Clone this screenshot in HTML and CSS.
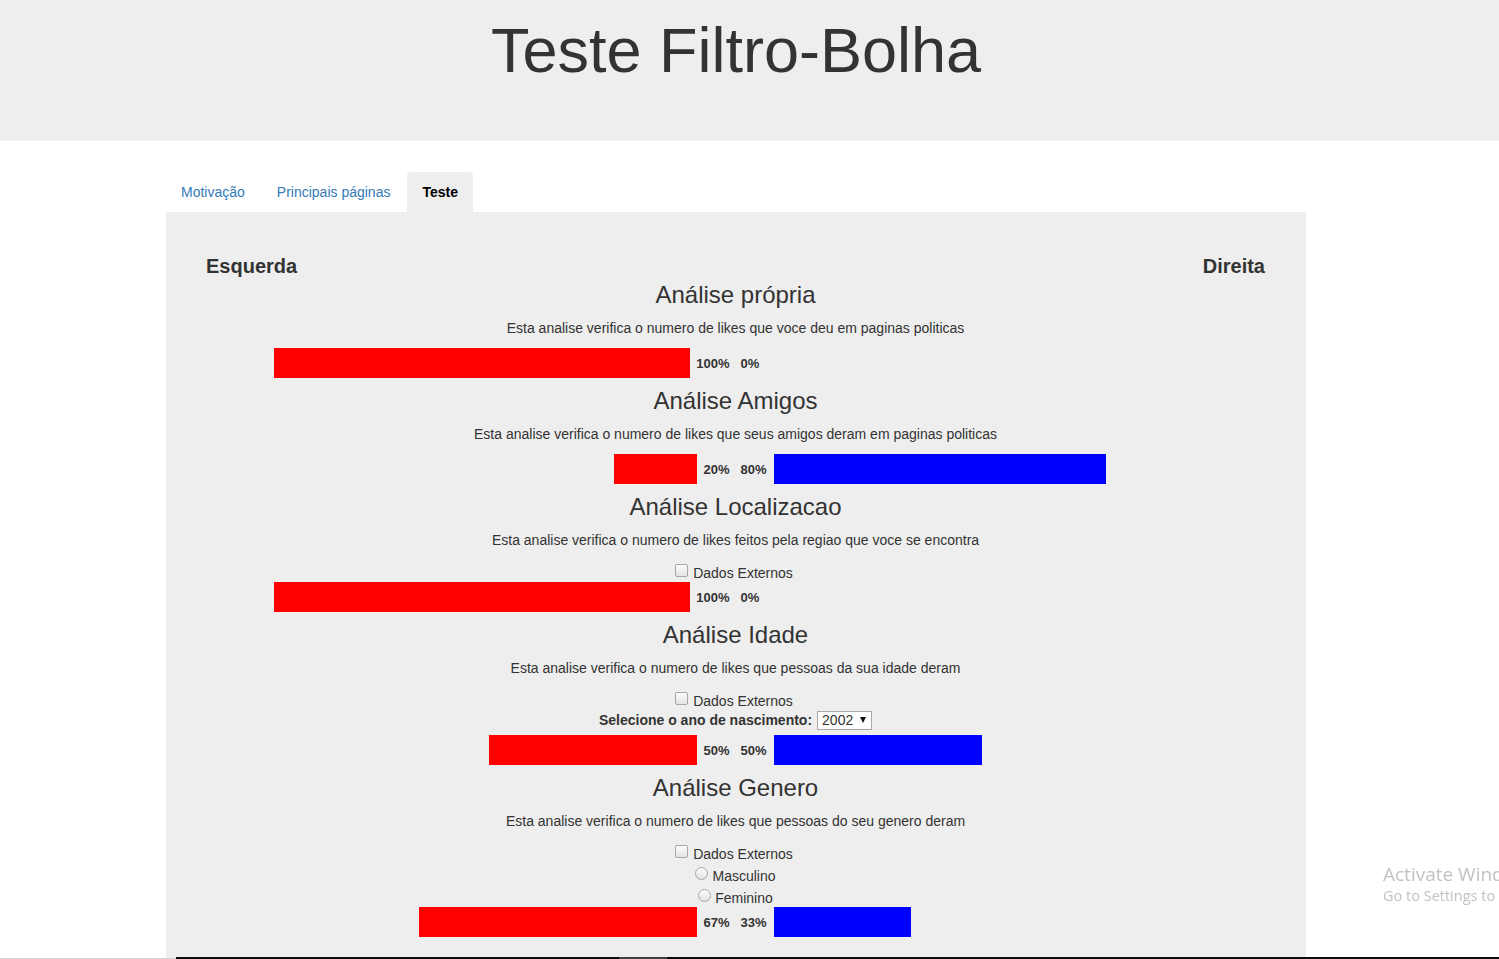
FILE: index.html
```html
<!DOCTYPE html>
<html lang="pt">
<head>
<meta charset="utf-8">
<title>Teste Filtro-Bolha</title>
<link rel="stylesheet" href="styles.css">
</head>
<body>
<header class="jumbotron">
  <div class="jumbotron-inner">
    <h1>Teste Filtro-Bolha</h1>
  </div>
</header>

<div class="container">
  <ul class="nav-tabs">
    <li><a href="#">Motivação</a></li>
    <li><a href="#">Principais páginas</a></li>
    <li class="active"><a href="#">Teste</a></li>
  </ul>

  <div class="panel">
    <div class="sides">
      <span>Esquerda</span>
      <span>Direita</span>
    </div>

    <section class="analysis">
      <h3>Análise própria</h3>
      <p class="desc">Esta analise verifica o numero de likes que voce deu em paginas politicas</p>
      <div class="result">
        <div class="side left"><span class="bar red" style="width:416px"></span><span class="pct">100%</span></div>
        <div class="side right"><span class="pct">0%</span><span class="bar blue" style="width:0px"></span></div>
      </div>
    </section>

    <section class="analysis">
      <h3>Análise Amigos</h3>
      <p class="desc">Esta analise verifica o numero de likes que seus amigos deram em paginas politicas</p>
      <div class="result">
        <div class="side left"><span class="bar red" style="width:83px"></span><span class="pct">20%</span></div>
        <div class="side right"><span class="pct">80%</span><span class="bar blue" style="width:332px"></span></div>
      </div>
    </section>

    <section class="analysis">
      <h3>Análise Localizacao</h3>
      <p class="desc">Esta analise verifica o numero de likes feitos pela regiao que voce se encontra</p>
      <label class="option"><input type="checkbox" class="check"><span>Dados Externos</span></label>
      <div class="result">
        <div class="side left"><span class="bar red" style="width:416px"></span><span class="pct">100%</span></div>
        <div class="side right"><span class="pct">0%</span><span class="bar blue" style="width:0px"></span></div>
      </div>
    </section>

    <section class="analysis">
      <h3>Análise Idade</h3>
      <p class="desc">Esta analise verifica o numero de likes que pessoas da sua idade deram</p>
      <label class="option"><input type="checkbox" class="check"><span>Dados Externos</span></label>
      <div class="select-line">
        <label class="select-label" for="ano">Selecione o ano de nascimento:</label>
        <span class="select-wrap">
          <select id="ano" class="select">
            <option>2002</option>
          </select>
        </span>
      </div>
      <div class="result">
        <div class="side left"><span class="bar red" style="width:208px"></span><span class="pct">50%</span></div>
        <div class="side right"><span class="pct">50%</span><span class="bar blue" style="width:208px"></span></div>
      </div>
    </section>

    <section class="analysis">
      <h3>Análise Genero</h3>
      <p class="desc">Esta analise verifica o numero de likes que pessoas do seu genero deram</p>
      <label class="option"><input type="checkbox" class="check"><span>Dados Externos</span></label>
      <label class="option radio-line"><input type="radio" name="genero" class="radio"><span>Masculino</span></label>
      <label class="option radio-line"><input type="radio" name="genero" class="radio"><span>Feminino</span></label>
      <div class="result">
        <div class="side left"><span class="bar red" style="width:278px"></span><span class="pct">67%</span></div>
        <div class="side right"><span class="pct">33%</span><span class="bar blue" style="width:137px"></span></div>
      </div>
    </section>

    <div class="panel-tail"></div>
  </div>
</div>

<div class="watermark">
  <div class="wm-title">Activate Windows</div>
  <div class="wm-sub">Go to Settings to activate Windows.</div>
</div>

<div class="taskbar-edge">
  <span class="edge-light"></span>
  <span class="edge-dark"></span>
  <span class="edge-gray"></span>
  <span class="edge-dark edge-fill"></span>
</div>
</body>
</html>
```

FILE: styles.css
```css
html {
  overflow: hidden;
}

body {
  margin: 0;
  font-family: "Liberation Sans", Arial, Helvetica, sans-serif;
  font-size: 14px;
  line-height: 20px;
  color: #333;
  background: #fff;
}

.jumbotron {
  background: #eee;
  height: 141px;
  box-sizing: border-box;
  padding-top: 16px;
}

.jumbotron-inner {
  width: 1140px;
  margin-left: 166px;
}

.jumbotron h1 {
  margin: 0;
  text-align: center;
  font-size: 63px;
  line-height: 69px;
  font-weight: 400;
  color: #333;
}

.container {
  width: 1140px;
  margin: 31px 0 0 166px;
}

.nav-tabs {
  list-style: none;
  margin: 0;
  padding: 0;
  display: flex;
}

.nav-tabs li {
  margin-right: 2px;
}

.nav-tabs a {
  display: block;
  padding: 10px 15px;
  line-height: 20px;
  font-size: 14px;
  color: #337ab7;
  text-decoration: none;
  border-radius: 4px 4px 0 0;
}

.nav-tabs .active a {
  background: #eee;
  color: #000;
  font-weight: 700;
}

.panel {
  background: #eee;
  padding: 43px 41px 0 40px;
  min-height: 800px;
}

.sides {
  display: flex;
  justify-content: space-between;
  font-size: 20px;
  line-height: 22px;
  font-weight: 700;
  color: #333;
  margin-bottom: 5px;
}

.analysis h3 {
  margin: 0 0 10px;
  font-size: 24px;
  line-height: 26px;
  font-weight: 400;
  text-align: center;
  color: #333;
}

.analysis + .analysis h3 {
  margin-top: 10px;
}

.desc {
  margin: 0 0 10px;
  text-align: center;
  font-size: 14px;
  line-height: 20px;
}

.option {
  display: flex;
  justify-content: center;
  align-items: center;
  height: 22px;
  box-sizing: border-box;
  padding-top: 4px;
  padding-right: 3px;
  font-size: 14px;
  color: #333;
}

.check,
.radio {
  -webkit-appearance: none;
  appearance: none;
  width: 13px;
  height: 13px;
  border: 1px solid #a6a6a6;
  background: linear-gradient(#fcfcfc, #e3e3e3);
  box-sizing: border-box;
}

.check {
  border-radius: 2px;
  margin: -5px 5px 0 0;
}

.radio {
  border-radius: 50%;
  margin: -5px 4px 0 0;
}

.radio-line {
  padding-right: 0;
}

.select-line {
  display: flex;
  justify-content: center;
  align-items: center;
  height: 19px;
  margin-bottom: 6px;
}

.select-label {
  font-weight: 700;
  font-size: 14px;
  margin-right: 5px;
}

.select-wrap {
  position: relative;
  display: inline-block;
}

.select {
  -webkit-appearance: none;
  appearance: none;
  width: 55px;
  height: 19px;
  box-sizing: border-box;
  border: 1px solid #a9a9a9;
  border-radius: 0;
  background: #fff;
  font-family: "Liberation Sans", Arial, sans-serif;
  font-size: 14px;
  line-height: 17px;
  color: #333;
  padding: 0 0 0 4px;
  margin: 0;
}

.select-wrap::after {
  content: "";
  position: absolute;
  right: 6px;
  top: 7px;
  border-left: 3.5px solid transparent;
  border-right: 3.5px solid transparent;
  border-top: 6px solid #111;
  pointer-events: none;
}

.result {
  display: grid;
  grid-template-columns: 1fr 1fr;
  height: 30px;
}

.side {
  display: flex;
  align-items: center;
}

.side.left {
  justify-content: flex-end;
}

.side.right {
  justify-content: flex-start;
}

.bar {
  display: block;
  height: 30px;
}

.red {
  background: #ff0000;
}

.blue {
  background: #0000ff;
}

.pct {
  font-size: 13px;
  font-weight: 700;
  color: #333;
  padding-top: 2px;
}

.left .pct {
  margin: 0 6px 0 6px;
}

.right .pct {
  margin: 0 7px 0 5px;
}

.watermark {
  position: fixed;
  left: 1383px;
  top: 862px;
  white-space: nowrap;
  font-family: "Open Sans", "Noto Sans", sans-serif;
  color: #c2c2c2;
}

.wm-title {
  font-size: 19px;
  line-height: 24px;
}

.wm-sub {
  font-size: 14.5px;
  line-height: 20px;
}

.taskbar-edge {
  position: fixed;
  left: 0;
  right: 0;
  bottom: 0;
  height: 2px;
  display: flex;
}

.edge-light {
  width: 176px;
  height: 1px;
  margin-top: 1px;
  background: #d6d6d6;
}

.edge-dark {
  width: 443px;
  background: #0b0d10;
}

.edge-gray {
  width: 48px;
  background: #3e3e3e;
}

.edge-fill {
  flex: 1;
}
```
